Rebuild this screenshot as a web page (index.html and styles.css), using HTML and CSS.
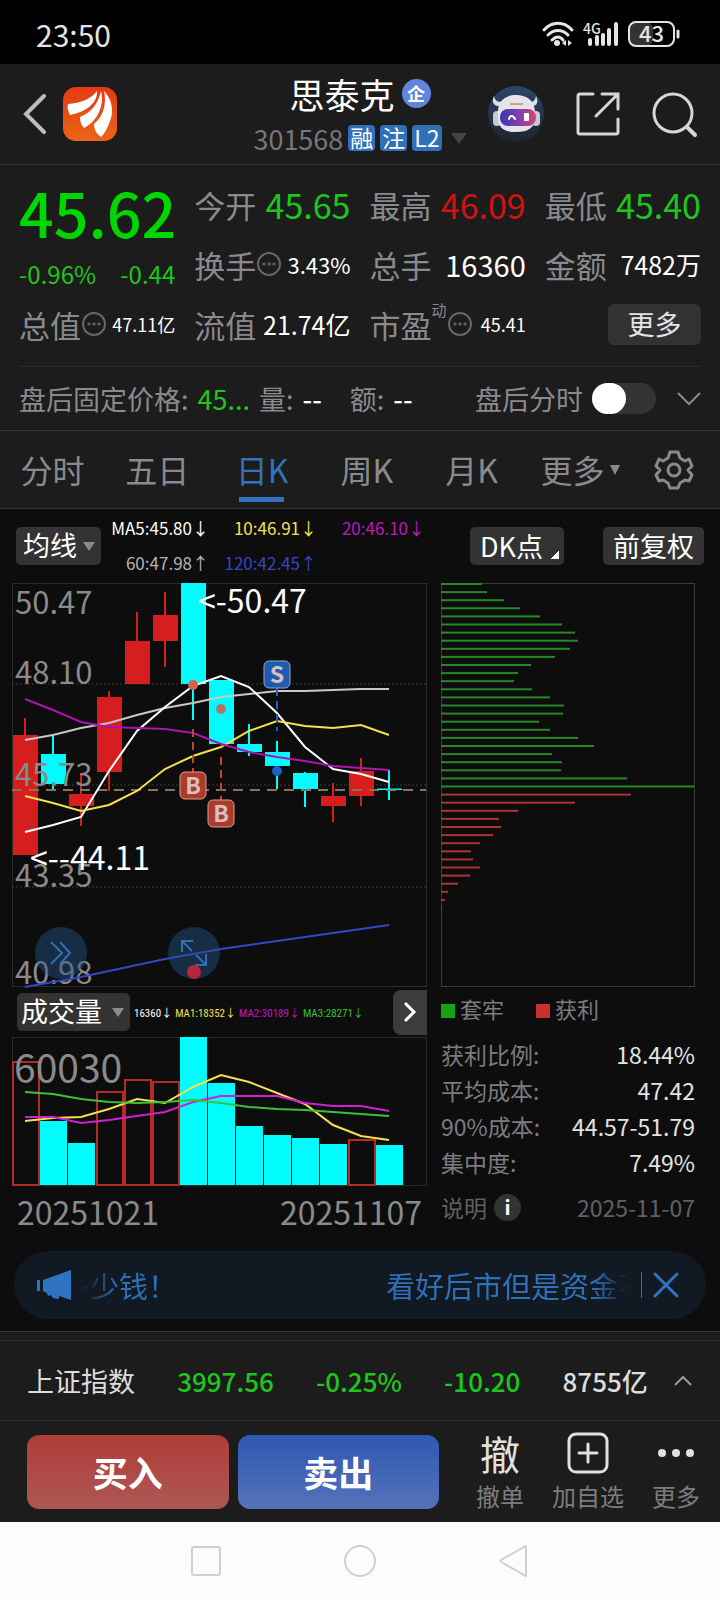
FILE: index.html
```html
<!DOCTYPE html>
<html lang="zh-CN">
<head>
  <meta charset="UTF-8" />
  <meta name="viewport" content="width=device-width, initial-scale=1" />
  <title>思泰克 301568</title>
  <link rel="stylesheet" href="styles.css">
</head>
<body>

  <div class="status-bar">
    <span class="clock">23:50</span>
    <svg class="status-icons" width="142" height="32" viewBox="0 0 142 32">
      <g fill="none" stroke="#e4e4e4" stroke-width="3" stroke-linecap="round">
        <path d="M4 12C12 3 24 3 32 12"/>
        <path d="M8 17C14 11 22 11 28 17"/>
        <path d="M12 22C16 18 20 18 23 22"/>
      </g>
      <circle cx="17" cy="25" r="3" fill="#e4e4e4"/>
      <path d="M26 22v6l-4-3zM28 22v6l4-3z" fill="#e4e4e4"/>
      <text x="43" y="16" class="net">4G</text>
      <g stroke="#e4e4e4" stroke-width="4" stroke-linecap="round">
        <path d="M50 22v4M57 19v7M63 17v9M69 12v14M76 6v20"/>
      </g>
      <rect x="89" y="4" width="24" height="24" rx="7" fill="#333"/>
      <rect x="89" y="4" width="45" height="24" rx="7" fill="none" stroke="#e4e4e4" stroke-width="2"/>
      <path d="M138 13v6" stroke="#e4e4e4" stroke-width="3" stroke-linecap="round"/>
      <text x="99" y="24" class="battery">43</text>
    </svg>
  </div>

  <header class="header">
    <div class="header-left">
      <button class="icon-btn" aria-label="返回">
        <svg width="24" height="42" viewBox="0 0 24 42"><path d="M21 3L3 21L21 39" fill="none" stroke="#bdbdbd" stroke-width="4" stroke-linecap="round"/></svg>
      </button>
      <svg class="logo" width="54" height="54" viewBox="0 0 54 54">
        <defs><linearGradient id="logoBg" x1="0" y1="0" x2="0" y2="1"><stop offset="0" stop-color="#e53a14"/><stop offset="1" stop-color="#ea6516"/></linearGradient></defs>
        <rect width="54" height="54" rx="13" fill="url(#logoBg)"/>
        <path fill="#fff" d="M5 17C18 16 28 12 34 4C35 15 24 25 7 28C5 24 4 20 5 17ZM38 4C35 18 27 26 17 30C17 34 18 38 21 41C33 35 42 20 38 4ZM41 4C49 12 51 24 47 34C45 40 42 46 38 50C34 47 31 43 31 37C40 30 44 17 41 4Z"/>
      </svg>
    </div>
    <div class="header-title">
      <h1>思泰克<span class="corp">企</span></h1>
      <div class="code">301568 <span class="tag">融</span><span class="tag">注</span><span class="tag">L2</span><span class="caret"></span></div>
    </div>
    <div class="header-right">
      <button class="icon-btn" aria-label="助手">
        <svg width="58" height="58" viewBox="0 0 58 58">
          <defs>
            <linearGradient id="botBg" x1="0" y1="0" x2="0" y2="1"><stop offset="0" stop-color="#2f4468"/><stop offset="1" stop-color="#1c2430"/></linearGradient>
            <linearGradient id="visor"><stop offset="0" stop-color="#3a36b0"/><stop offset=".5" stop-color="#7c3fae"/><stop offset="1" stop-color="#d4476a"/></linearGradient>
          </defs>
          <circle cx="29" cy="29" r="28" fill="url(#botBg)"/>
          <path d="M7 11C4 17 7 22 14 21L17 16C11 18 8 16 7 11ZM49 11C52 17 50 22 43 21L40 16C46 18 48 16 49 11Z" fill="#dcdde6"/>
          <rect x="6" y="26" width="8" height="15" rx="4" fill="#c9c8d2"/>
          <rect x="45" y="26" width="8" height="15" rx="4" fill="#c9c8d2"/>
          <path d="M11 30C10 17 17 10 29 10C41 10 49 17 48 30C49 42 42 47 29 47C16 47 10 42 11 30Z" fill="#e6e4ea"/>
          <rect x="13" y="24" width="36" height="17" rx="8" fill="url(#visor)"/>
          <path d="M22 34C23 30 26 30 28 34" fill="none" stroke="#fff" stroke-width="2" stroke-linecap="round"/>
          <rect x="37" y="28" width="5" height="8" rx="1" fill="#fff"/>
          <path d="M23 19h13" stroke="#c9a48c" stroke-width="2"/>
        </svg>
      </button>
      <button class="icon-btn" aria-label="分享">
        <svg width="46" height="46" viewBox="0 0 46 46"><path d="M18 3H5Q3 3 3 5V41Q3 43 5 43H41Q43 43 43 41V28M27 3H43V18M43 3L21 25" fill="none" stroke="#d6d6d6" stroke-width="3" stroke-linecap="round"/></svg>
      </button>
      <button class="icon-btn" aria-label="搜索">
        <svg width="46" height="46" viewBox="0 0 46 46"><circle cx="22" cy="22" r="19" fill="none" stroke="#d6d6d6" stroke-width="3"/><path d="M36 36L44 44" stroke="#d6d6d6" stroke-width="4" stroke-linecap="round"/></svg>
      </button>
    </div>
  </header>

  <section class="quote">
    <div class="quote-grid">
      <div class="price-cell">
        <strong class="price">45.62</strong>
        <div class="change"><span>-0.96%</span><span>-0.44</span></div>
      </div>
      <div class="cell"><span class="label">今开</span><span class="xl green">45.65</span></div>
      <div class="cell"><span class="label">最高</span><span class="xl red">46.09</span></div>
      <div class="cell"><span class="label">最低</span><span class="xl green">45.40</span></div>
      <div class="cell"><span class="label">换手<i class="dots"></i></span><span class="sm">3.43%</span></div>
      <div class="cell"><span class="label">总手</span><span class="lg">16360</span></div>
      <div class="cell"><span class="label">金额</span><span class="md">7482万</span></div>
      <div class="cell"><span class="label">总值<i class="dots"></i></span><span class="xs">47.11亿</span></div>
      <div class="cell"><span class="label">流值</span><span class="md">21.74亿</span></div>
      <div class="cell"><span class="label">市盈<sup>动</sup><i class="dots"></i></span><span class="xs">45.41</span></div>
      <div class="cell end"><button class="more-btn">更多</button></div>
    </div>
    <div class="after-hours">
      <span>盘后固定价格:</span><span class="green">45...</span>
      <span>量:</span><b>--</b>
      <span class="amount">额:</span><b>--</b>
      <label for="afterSwitch">盘后分时</label>
      <input type="checkbox" id="afterSwitch" class="switch" />
      <button class="icon-btn" aria-label="展开">
        <svg width="24" height="16" viewBox="0 0 24 16"><path d="M1 2L12 13L23 2" fill="none" stroke="#8a8a8e" stroke-width="2"/></svg>
      </button>
    </div>
  </section>

  <nav class="tabs">
    <div class="tab-list">
      <button>分时</button>
      <button>五日</button>
      <button class="active">日K</button>
      <button>周K</button>
      <button>月K</button>
      <button>更多<span class="caret small"></span></button>
    </div>
    <button class="icon-btn" aria-label="设置">
      <svg width="40" height="40" viewBox="0 0 40 40" fill="none" stroke="#8a8a8e" stroke-width="3" stroke-linejoin="round">
        <path d="M16 2H24L26 8L31 11L35 9L38 16L34 20L38 25L35 31L31 30L26 33L24 38H16L14 33L9 30L5 31L2 25L6 20L2 16L5 9L9 11L14 8Z"/>
        <circle cx="20" cy="20" r="6"/>
      </svg>
    </button>
  </nav>

  <main class="chart-area">
    <div class="toolbar">
      <div class="select-box">
        <select aria-label="主图指标"><option>均线</option></select>
      </div>
      <div class="ma-values">
        <span class="c-white">MA5:45.80↓</span><span class="c-yellow">10:46.91↓</span><span class="c-magenta">20:46.10↓</span>
        <span class="c-grey">60:47.98↑</span><span class="c-blue">120:42.45↑</span>
      </div>
      <div class="toolbar-right">
        <button class="tool-btn dk">DK点</button>
        <button class="tool-btn">前复权</button>
      </div>
    </div>

    <div class="charts">
      <div class="k-column">
        <div class="k-chart">
          <svg id="kChart" viewBox="0 0 415 404"></svg>
          <button class="round-btn jump" aria-label="快进">
            <svg width="24" height="26" viewBox="0 0 24 26"><path d="M2 2L13 13L2 24M11 2L21 13L11 24" fill="none" stroke="#2f6fb5" stroke-width="2"/></svg>
          </button>
          <button class="round-btn full" aria-label="全屏">
            <svg width="26" height="26" viewBox="0 0 26 26"><path d="M1 12V1H12M1 1L11 11M25 14V25H14M25 25L15 15" fill="none" stroke="#2f6fb5" stroke-width="2"/></svg>
            <span class="red-dot"></span>
          </button>
        </div>
        <div class="volume-head">
          <div class="select-box wide">
            <select aria-label="副图指标"><option>成交量</option></select>
          </div>
          <div class="vol-values">
            <span class="c-white">16360↓</span><span class="c-yellow">MA1:18352↓</span><span class="c-magenta">MA2:30189↓</span><span class="c-green">MA3:28271↓</span>
          </div>
          <button class="next-btn" aria-label="下一个">
            <svg width="14" height="22" viewBox="0 0 14 22"><path d="M2 2L11 11L2 20" fill="none" stroke="#fff" stroke-width="3"/></svg>
          </button>
        </div>
        <svg id="volChart" viewBox="0 0 415 149"></svg>
        <div class="dates"><span>20251021</span><span>20251107</span></div>
      </div>

      <div class="chip-column">
        <svg id="chipChart" viewBox="0 0 254 404"></svg>
        <div class="legend">
          <span class="trapped">套牢</span><span class="profit">获利</span>
        </div>
        <dl class="stats">
          <div><dt>获利比例:</dt><dd>18.44%</dd></div>
          <div><dt>平均成本:</dt><dd>47.42</dd></div>
          <div><dt>90%成本:</dt><dd>44.57-51.79</dd></div>
          <div><dt>集中度:</dt><dd>7.49%</dd></div>
        </dl>
        <div class="explain"><span>说明</span><i class="info">i</i><time>2025-11-07</time></div>
      </div>
    </div>

    <div class="notice">
      <svg width="34" height="30" viewBox="0 0 34 30" fill="#2f74c0"><path d="M0 10h3v11H0zM6 10L34 0V30L25 27L23 26L21 29L16 28L14 25L11 26L10 23L6 21Z"/></svg>
      <div class="marquee"><span>多少钱！</span><span>看好后市但是资金不足</span></div>
      <button class="notice-close" aria-label="关闭">
        <svg width="24" height="26" viewBox="0 0 24 26"><path d="M1 2L23 24M23 2L1 24" stroke="#2f74c0" stroke-width="3" stroke-linecap="round"/></svg>
      </button>
    </div>
  </main>

  <div class="panel-edge"></div>
  <div class="index-bar">
    <span class="index-name">上证指数</span>
    <span class="green">3997.56</span>
    <span class="green">-0.25%</span>
    <span class="green">-10.20</span>
    <span>8755亿</span>
    <button class="icon-btn" aria-label="展开指数">
      <svg width="18" height="12" viewBox="0 0 18 12"><path d="M1 10L9 2L17 10" fill="none" stroke="#9a9a9a" stroke-width="2"/></svg>
    </button>
  </div>

  <div class="actions">
    <button class="trade buy">买入</button>
    <button class="trade sell">卖出</button>
    <div class="action-links">
      <button class="action"><span class="glyph">撤</span>撤单</button>
      <button class="action">
        <span class="glyph"><svg width="42" height="42" viewBox="0 0 42 42" fill="none" stroke="#e0e0e0" stroke-width="3"><rect x="2" y="2" width="38" height="38" rx="7"/><path d="M21 12V30M12 21H30" stroke-linecap="round"/></svg></span>加自选
      </button>
      <button class="action">
        <span class="glyph"><svg width="36" height="8" viewBox="0 0 36 8" fill="#e0e0e0"><circle cx="4" cy="4" r="4"/><circle cx="18" cy="4" r="4"/><circle cx="32" cy="4" r="4"/></svg></span>更多
      </button>
    </div>
  </div>

  <div class="system-nav">
    <svg width="34" height="34" viewBox="0 0 34 34"><rect x="3" y="3" width="28" height="28" rx="2"/></svg>
    <svg width="34" height="34" viewBox="0 0 34 34"><circle cx="17" cy="17" r="15"/></svg>
    <svg width="34" height="34" viewBox="0 0 34 34"><path d="M29 3V31Q29 33 27 31L4 18Q3 17 4 16L27 3Q29 1 29 3Z"/></svg>
  </div>

  <script>
    const STEP = 28;
    const X0 = 13;

    // [body top, body bottom, high, low, up]
    const candles = [
      [152, 272, 135, 272, 1], [171, 201, 151, 207, 0], [211, 223, 190, 243, 1],
      [114, 189, 108, 208, 1], [58, 101, 29, 101, 1], [32, 58, 9, 84, 1],
      [0, 101, 0, 137, 0], [97, 161, 97, 161, 0], [161, 169, 141, 173, 0],
      [169, 183, 158, 206, 0], [190, 206, 189, 224, 0], [213, 223, 200, 239, 1],
      [188, 213, 175, 223, 1], [206, 207, 187, 217, 0]
    ];

    const averages = [
      ["#c8c8c8", [157, 152, 145, 140, 132, 125, 120, 114, 111, 108, 108, 107, 106, 106]],
      ["#fff", [249, 242, 234, 188, 148, 124, 103, 93, 104, 130, 164, 186, 191, 199]],
      ["#f5e050", [213, 220, 228, 222, 208, 186, 173, 164, 148, 138, 143, 145, 142, 152]],
      ["#b012b0", [116, 127, 139, 144, 145, 146, 150, 161, 169, 174, 178, 183, 185, 187]],
      ["#3545c8", [404, 399, 394, 388, 382, 376, 371, 366, 362, 358, 354, 350, 346, 342]]
    ];

    function line(color, ys) {
      const pts = ys.map((y, i) => (X0 + i * STEP) + "," + y).join(" ");
      return `<polyline points="${pts}" fill="none" stroke="${color}" stroke-width="2"/>`;
    }

    function marker(x, y, letter, color, edge) {
      return `<rect x="${x - 13}" y="${y}" width="26" height="27" rx="5" fill="${color}" stroke="${edge}" stroke-width="1"/>
        <text x="${x}" y="${y + 22}" class="mark">${letter}</text>`;
    }

    // K line
    let k = `<rect x="0.5" y="0.5" width="414" height="403" fill="none" stroke="#2b2b2b"/>`;
    [101, 202, 304].forEach(y => {
      k += `<path d="M0 ${y}H414" stroke="#3a3a3a" stroke-dasharray="2 2"/>`;
    });
    candles.forEach(([top, bottom, high, low, up], i) => {
      const x = X0 + i * STEP;
      const color = up ? "#d61e1e" : "#00fcfc";
      k += `<path d="M${x} ${high}V${low}" stroke="${color}" stroke-width="2"/>
        <rect x="${x - 12}" y="${top}" width="25" height="${bottom - top}" fill="${color}"/>`;
    });
    k += `<path d="M0 207H414" stroke="#8a7358" stroke-width="2" stroke-dasharray="10 7"/>
      <path d="M365 206H390" stroke="#00fcfc"/>`;
    [[31, "50.47"], [101, "48.10"], [203, "45.73"], [304, "43.35"], [401, "40.98"]].forEach(([y, t]) => {
      k += `<text x="3" y="${y}" class="scale">${t}</text>`;
    });
    averages.forEach(([c, ys]) => k += line(c, ys));
    k += `<path d="M181 146V189M209 174V217" stroke="#c2452f" stroke-width="2" stroke-dasharray="8 5"/>
      <path d="M265 105V148" stroke="#2563b8" stroke-width="2" stroke-dasharray="8 5"/>
      <circle cx="181" cy="102" r="5" fill="#dc5f4c"/>
      <circle cx="209" cy="126" r="5" fill="#b47468"/>
      <circle cx="265" cy="188" r="5" fill="#1a5fc4"/>`;
    k += marker(181, 189, "B", "#ad3a2b", "#d8a097");
    k += marker(209, 217, "B", "#ad3a2b", "#d8a097");
    k += marker(265, 78, "S", "#1f5bb0", "#93a9c9");
    k += `<text x="186" y="30" class="peak">&lt;-50.47</text>
      <text x="18" y="287" class="peak">&lt;--44.11</text>`;
    document.getElementById("kChart").innerHTML = k;

    // Volume
    const volumes = [25, 84, 106, 55, 43, 45, 0, 46, 89, 98, 101, 107, 103, 108];
    const redDays = [0, 3, 4, 5, 12];
    let v = `<rect x="0.5" y="0.5" width="414" height="148" fill="none" stroke="#2b2b2b"/>`;
    volumes.forEach((y, i) => {
      const x = i * STEP;
      v += redDays.includes(i)
        ? `<rect x="${x + 1}" y="${y}" width="26" height="${148 - y}" fill="none" stroke="#b52a27" stroke-width="2"/>`
        : `<rect x="${x}" y="${y}" width="27" height="${148 - y}" fill="#00fcfc"/>`;
    });
    v += `<text x="2" y="46" class="vol-scale">60030</text>`;
    v += line("#f5e050", [84, 81, 80, 72, 62, 66, 50, 38, 45, 56, 67, 88, 99, 103]);
    v += line("#d01fd0", [80, 80, 86, 83, 79, 75, 65, 59, 59, 59, 66, 69, 69, 74]);
    v += line("#3cc03c", [55, 57, 62, 65, 66, 65, 63, 66, 70, 72, 73, 75, 77, 79]);
    document.getElementById("volChart").innerHTML = v;

    // Cost distribution
    const trapped = [41, 46, 63, 79, 99, 121, 134, 137, 129, 114, 90, 77, 73, 91, 109, 123, 122, 98, 109, 137, 153, 111, 121, 120, 186, 253];
    const profit = [190, 134, 77, 58, 60, 52, 39, 30, 32, 39, 29, 17, 7, 4, 1];
    let c = `<rect x="0.5" y="0.5" width="253" height="403" fill="none" stroke="#3a3a3a"/>`;
    trapped.concat(profit).forEach((w, i) => {
      const color = i < trapped.length ? "#258a25" : "#ab3434";
      c += `<rect x="0" y="${(i * 8.1).toFixed(1)}" width="${w}" height="2" fill="${color}"/>`;
    });
    document.getElementById("chipChart").innerHTML = c;
  </script>

</body>
</html>
```
FILE: styles.css
```css
* {
  box-sizing: border-box;
}

body {
  margin: 0;
  background-color: #1c1c1c;
  color: #fff;
  font-family: "Noto Sans CJK SC", Roboto, sans-serif;
}

button, select {
  font-family: inherit;
  color: inherit;
  border: none;
  background: none;
  padding: 0;
  cursor: pointer;
}

svg {
  display: block;
  overflow: visible;
}

.icon-btn {
  display: flex;
}

.green {
  color: #1cc61c;
}

.red {
  color: #d01212;
}

/* status bar */
.status-bar {
  display: flex;
  justify-content: space-between;
  align-items: center;
  height: 64px;
  padding: 4px 38px 0 36px;
  background-color: #000;
}

.clock {
  font-size: 30px;
  line-height: 40px;
  color: #e4e4e4;
}

.net {
  font-size: 14px;
  font-weight: 500;
  fill: #e4e4e4;
}

.battery {
  font-size: 22px;
  font-weight: 500;
  fill: #e4e4e4;
}

/* header */
.header {
  display: grid;
  grid-template-columns: 1fr auto 1fr;
  align-items: center;
  height: 101px;
  padding: 0 23px;
  border-bottom: 1px solid #333;
}

.header-left {
  display: flex;
  align-items: center;
  gap: 16px;
}

.header-title {
  padding-top: 3px;
  text-align: center;
}

.header h1 {
  display: flex;
  justify-content: center;
  align-items: center;
  gap: 7px;
  margin: 0;
  font-size: 35px;
  font-weight: 400;
  line-height: 45px;
}

.corp {
  width: 29px;
  height: 29px;
  border-radius: 50%;
  background-color: #5f86dc;
  font-size: 18px;
  font-weight: 700;
  line-height: 28px;
}

.code {
  display: flex;
  align-items: center;
  gap: 5px;
  font-size: 27px;
  line-height: 45px;
  color: #77777b;
}

.tag {
  min-width: 27px;
  height: 26px;
  padding: 0 2px;
  border-radius: 4px;
  background-color: #2f70b8;
  color: #fff;
  font-size: 23px;
  line-height: 25px;
}

.caret {
  display: inline-block;
  margin-left: 4px;
  border: 8px solid transparent;
  border-top: 11px solid #444;
  border-bottom: none;
}

.caret.small {
  margin: 0 0 8px 5px;
  border-width: 5px;
  border-top: 10px solid #8a8a8e;
  border-bottom: none;
}

.header-right {
  display: flex;
  justify-content: flex-end;
  align-items: center;
  gap: 30px;
}

/* quote */
.quote-grid {
  display: grid;
  grid-template-columns: repeat(4, minmax(0, 1fr));
  grid-auto-rows: 60px;
  column-gap: 19px;
  margin: 0 19px;
  padding: 9px 0 12px;
  border-bottom: 1px solid #2c2c2c;
}

.price-cell {
  grid-row: span 2;
}

.price {
  display: block;
  font-size: 61px;
  font-weight: 500;
  line-height: 76px;
  color: #00d600;
}

.change {
  display: flex;
  justify-content: space-between;
  font-size: 24px;
  line-height: 48px;
  color: #1cc61c;
}

.cell {
  display: flex;
  justify-content: space-between;
  align-items: center;
  white-space: nowrap;
}

.cell.end {
  justify-content: flex-end;
}

.label {
  display: flex;
  align-items: center;
  font-size: 31px;
  color: #8a8a8e;
}

.label sup {
  align-self: flex-start;
  font-size: 15px;
  line-height: 15px;
}

.dots {
  width: 24px;
  height: 24px;
  margin-left: 1px;
  border: 2px solid #66666a;
  border-radius: 50%;
  background: radial-gradient(circle, #66666a 1px, transparent 2px) center / 5px 20px repeat-x content-box;
  padding: 0 3px;
}

.xl {
  font-size: 34px;
}

.lg {
  font-size: 29px;
}

.md {
  font-size: 25px;
}

.sm {
  font-size: 22px;
}

.xs {
  font-size: 18px;
}

.more-btn {
  width: 93px;
  height: 41px;
  border-radius: 6px;
  background-color: #323232;
  color: #e4e4e4;
  font-size: 27px;
  line-height: 38px;
}

.after-hours {
  display: flex;
  align-items: center;
  gap: 9px;
  height: 63px;
  padding: 0 19px;
  font-size: 27px;
  line-height: 40px;
  color: #8a8a8e;
}

.after-hours b {
  color: #fff;
  font-weight: 500;
}

.after-hours .amount {
  margin-left: 19px;
}

.after-hours label {
  margin-left: auto;
}

.switch {
  appearance: none;
  width: 64px;
  height: 31px;
  margin: 0 12px 0 0;
  border-radius: 16px;
  background-color: #333;
}

.switch::before {
  content: "";
  display: block;
  width: 34px;
  height: 31px;
  border-radius: 17px;
  background-color: #fff;
}

.switch:checked::before {
  margin-left: 30px;
}

/* period tabs */
.tabs {
  display: flex;
  align-items: center;
  gap: 18px;
  height: 79px;
  padding-right: 26px;
  border-top: 1px solid #333;
  border-bottom: 1px solid #333;
}

.tab-list {
  flex: 1;
  display: grid;
  grid-template-columns: repeat(5, 1fr) 112px;
}

.tab-list button {
  font-size: 32px;
  line-height: 77px;
  color: #8a8a8e;
}

.tab-list .active {
  color: #3173bd;
  background: linear-gradient(#3173bd, #3173bd) center 66px / 45px 5px no-repeat;
}

/* chart area */
.chart-area {
  padding-bottom: 12px;
  background-color: #0d0d0d;
}

.toolbar {
  display: flex;
  align-items: center;
  height: 74px;
  padding: 0 16px;
}

.select-box {
  position: relative;
  flex: none;
  width: 85px;
  height: 38px;
  border-radius: 5px;
  background-color: #333;
}

.select-box.wide {
  width: 113px;
}

.select-box select {
  appearance: none;
  width: 100%;
  height: 38px;
  padding: 0 0 3px 7px;
  font-size: 27px;
  line-height: 34px;
}

.select-box.wide select {
  padding-left: 4px;
}

.select-box::after {
  content: "";
  position: absolute;
  right: 6px;
  top: 15px;
  border: 6px solid transparent;
  border-top: 9px solid #8a8a8e;
  border-bottom: none;
  pointer-events: none;
}

.ma-values {
  display: grid;
  grid-template-columns: repeat(3, 108px);
  padding-bottom: 3px;
  font-size: 17px;
  line-height: 35px;
  text-align: right;
}

.c-white {
  color: #fff;
}

.c-yellow {
  color: #f5e050;
}

.c-magenta {
  color: #c018c0;
}

.c-grey {
  color: #b4b4b4;
}

.c-blue {
  color: #3545c8;
}

.c-green {
  color: #3cc03c;
}

.toolbar-right {
  display: flex;
  gap: 39px;
  margin-left: auto;
}

.tool-btn {
  height: 38px;
  padding: 0 10px;
  border-radius: 5px;
  background-color: #333;
  font-size: 27px;
  line-height: 34px;
}

.tool-btn.dk {
  padding-right: 21px;
  background: linear-gradient(135deg, transparent 50%, #fff 50%) right 5px bottom 6px / 8px 8px no-repeat #333;
}

.charts {
  display: grid;
  grid-template-columns: 415fr 254fr;
  gap: 14px;
  padding: 0 25px 0 12px;
}

.charts > div > svg, .k-chart > svg {
  width: 100%;
}

.k-chart {
  position: relative;
}

.scale {
  font-size: 31px;
  fill: #8a8a8a;
}

.vol-scale {
  font-size: 39px;
  fill: #8a8a8a;
}

.peak {
  font-size: 32px;
  fill: #fff;
}

.mark {
  font-size: 23px;
  font-weight: 700;
  text-anchor: middle;
  fill: #d8c0c0;
}

.round-btn {
  position: absolute;
  bottom: 8px;
  display: flex;
  justify-content: center;
  align-items: center;
  width: 52px;
  height: 52px;
  border-radius: 50%;
  background-color: rgba(35, 85, 135, 0.45);
}

.jump {
  left: 23px;
}

.full {
  left: 156px;
}

.red-dot {
  position: absolute;
  left: 19px;
  bottom: 0;
  width: 14px;
  height: 14px;
  border-radius: 50%;
  background-color: #b8243a;
}

.volume-head {
  display: flex;
  align-items: center;
  height: 50px;
  padding-left: 5px;
}

.vol-values {
  display: flex;
  gap: 3px;
  margin-left: 4px;
  font-family: "Liberation Sans Narrow", "Roboto Condensed", Roboto, "Noto Sans CJK SC", sans-serif;
  font-size: 11px;
}

.next-btn {
  display: flex;
  justify-content: center;
  align-items: center;
  width: 34px;
  height: 45px;
  margin-left: auto;
  border-radius: 8px 0 0 8px;
  background-color: #3c3c3c;
}

.dates {
  display: flex;
  justify-content: space-between;
  padding: 0 5px;
  font-size: 32px;
  line-height: 50px;
  color: #8a8a8a;
}

/* cost distribution */
.legend {
  display: flex;
  gap: 32px;
  font-size: 22px;
  line-height: 42px;
  color: #7c7c80;
}

.legend span::before {
  content: "";
  display: inline-block;
  width: 14px;
  height: 14px;
  margin-right: 5px;
}

.legend .trapped::before {
  background-color: #14a514;
}

.legend .profit::before {
  background-color: #c93131;
}

.stats {
  margin: 7px 0 0;
  font-size: 23px;
  line-height: 36px;
}

.stats div {
  display: flex;
  justify-content: space-between;
}

.stats dt {
  color: #7c7c80;
}

.stats dd {
  margin: 0;
  color: #e4e4e4;
}

.explain {
  display: flex;
  align-items: center;
  gap: 7px;
  margin-top: 9px;
  font-size: 23px;
  line-height: 36px;
  color: #606064;
}

.explain time {
  margin-left: auto;
}

.info {
  width: 27px;
  height: 27px;
  border-radius: 50%;
  background-color: #333;
  color: #fff;
  font-size: 20px;
  font-style: normal;
  font-weight: 700;
  line-height: 25px;
  text-align: center;
}

/* notice */
.notice {
  display: flex;
  align-items: center;
  height: 68px;
  margin: 15px 14px 0;
  padding: 0 28px 0 23px;
  border-radius: 34px;
  background-color: #111a22;
  color: #2f70b8;
}

.marquee {
  flex: 1;
  display: flex;
  gap: 209px;
  margin: 0 12px 0 11px;
  overflow: hidden;
  font-size: 29px;
  line-height: 64px;
  white-space: nowrap;
  mask-image: linear-gradient(90deg, transparent, #000 36px, #000 calc(100% - 36px), transparent);
}

.marquee span:first-child {
  margin-left: -21px;
}

.notice-close {
  padding-left: 12px;
  border-left: 1px solid #2f70b8;
}

/* index */
.panel-edge {
  height: 9px;
  border-top: 1px solid #3a3a3a;
}

.index-bar {
  display: flex;
  justify-content: space-between;
  align-items: center;
  height: 81px;
  padding: 0 28px 0 27px;
  border-top: 1px solid #2c2c2c;
  border-bottom: 1px solid #2c2c2c;
  font-size: 26px;
  font-weight: 500;
  color: #dcdcdc;
}

.index-name {
  font-size: 27px;
  font-weight: 400;
}

.index-bar .icon-btn {
  margin-left: -16px;
}

/* trade buttons */
.actions {
  display: flex;
  align-items: center;
  gap: 9px;
  height: 101px;
  padding: 0 20px 0 27px;
}

.trade {
  flex: 1;
  height: 74px;
  border-radius: 12px;
  font-size: 35px;
  font-weight: 700;
}

.buy {
  background: linear-gradient(#b03c38, #ad5854);
}

.sell {
  background: linear-gradient(#2f58b4, #5472b8);
}

.action-links {
  display: flex;
  gap: 28px;
  margin-left: 28px;
  padding-top: 2px;
}

.action {
  font-size: 24px;
  line-height: 40px;
  color: #7c7c80;
}

.glyph {
  display: flex;
  justify-content: center;
  align-items: center;
  height: 46px;
  font-size: 40px;
  color: #e0e0e0;
}

/* system navigation */
.system-nav {
  display: flex;
  justify-content: center;
  align-items: center;
  gap: 120px;
  height: 78px;
  background-color: #fcfcfc;
}

.system-nav svg {
  fill: none;
  stroke: #d0d0d0;
  stroke-width: 2;
}
```
